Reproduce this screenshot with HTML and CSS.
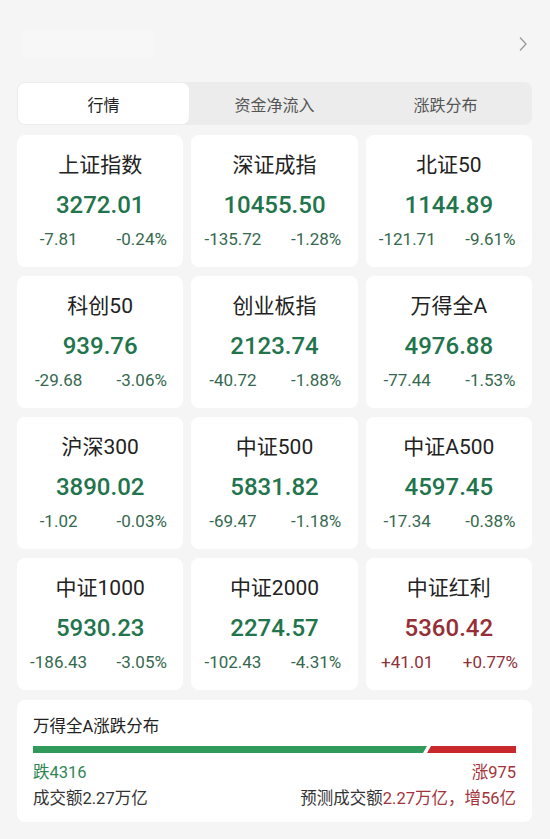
FILE: index.html
```html
<!DOCTYPE html>
<html lang="zh-CN">
<head>
<meta charset="utf-8">
<title>行情</title>
<link rel="stylesheet" href="styles.css">
</head>
<body>
<div class="page">
  <header class="header">
    <div class="header-title"></div>
    <svg class="chevron" width="10" height="16" viewBox="0 0 10 16"><path d="M2 1.5 L8 8 L2 14.5" fill="none" stroke="#9a9a9a" stroke-width="1.3"/></svg>
  </header>

  <nav class="tabs">
    <div class="tab active">行情</div>
    <div class="tab">资金净流入</div>
    <div class="tab">涨跌分布</div>
  </nav>

  <section class="grid">
    <div class="card down"><div class="name">上证指数</div><div class="value">3272.01</div><div class="chg"><span>-7.81</span><span>-0.24%</span></div></div>
    <div class="card down"><div class="name">深证成指</div><div class="value">10455.50</div><div class="chg"><span>-135.72</span><span>-1.28%</span></div></div>
    <div class="card down"><div class="name">北证50</div><div class="value">1144.89</div><div class="chg"><span>-121.71</span><span>-9.61%</span></div></div>

    <div class="card down"><div class="name">科创50</div><div class="value">939.76</div><div class="chg"><span>-29.68</span><span>-3.06%</span></div></div>
    <div class="card down"><div class="name">创业板指</div><div class="value">2123.74</div><div class="chg"><span>-40.72</span><span>-1.88%</span></div></div>
    <div class="card down"><div class="name">万得全A</div><div class="value">4976.88</div><div class="chg"><span>-77.44</span><span>-1.53%</span></div></div>

    <div class="card down"><div class="name">沪深300</div><div class="value">3890.02</div><div class="chg"><span>-1.02</span><span>-0.03%</span></div></div>
    <div class="card down"><div class="name">中证500</div><div class="value">5831.82</div><div class="chg"><span>-69.47</span><span>-1.18%</span></div></div>
    <div class="card down"><div class="name">中证A500</div><div class="value">4597.45</div><div class="chg"><span>-17.34</span><span>-0.38%</span></div></div>

    <div class="card down"><div class="name">中证1000</div><div class="value">5930.23</div><div class="chg"><span>-186.43</span><span>-3.05%</span></div></div>
    <div class="card down"><div class="name">中证2000</div><div class="value">2274.57</div><div class="chg"><span>-102.43</span><span>-4.31%</span></div></div>
    <div class="card up"><div class="name">中证红利</div><div class="value">5360.42</div><div class="chg"><span>+41.01</span><span>+0.77%</span></div></div>
  </section>

  <section class="dist">
    <div class="dist-title">万得全A涨跌分布</div>
    <div class="bar">
      <div class="bar-down" style="flex: 4316"></div>
      <div class="bar-up" style="flex: 975"></div>
    </div>
    <div class="dist-row counts">
      <span class="g">跌4316</span>
      <span class="r">涨975</span>
    </div>
    <div class="dist-row">
      <span>成交额2.27万亿</span>
      <span>预测成交额<em class="r">2.27万亿，增56亿</em></span>
    </div>
  </section>
</div>
</body>
</html>
```

FILE: styles.css
```css
* { box-sizing: border-box; }
html, body { margin: 0; padding: 0; }
body {
  background: #f5f5f5;
  font-family: Roboto, "Noto Sans CJK SC", sans-serif;
  color: #222;
}
.page {
  width: 550px;
  padding: 0 18px 0 17px;
}
.header {
  height: 48px;
  margin-top: 20px;
  margin-bottom: 14px;
  display: flex;
  align-items: center;
  justify-content: space-between;
}
.header-title {
  width: 132px;
  height: 28px;
  margin-left: 5px;
  background: #f7f7f7;
  border-radius: 2px;
}
.chevron { margin-right: 4px; }

.tabs {
  height: 43px;
  background: #ececec;
  border-radius: 8px;
  padding: 1px;
  display: grid;
  grid-template-columns: repeat(3, 1fr);
}
.tab {
  display: flex;
  align-items: center;
  justify-content: center;
  font-size: 16px;
  color: #555;
  border-radius: 7px;
}
.tab.active {
  background: #fff;
  color: #222;
}

.grid {
  margin-top: 10px;
  display: grid;
  grid-template-columns: repeat(3, 1fr);
  grid-auto-rows: 132px;
  gap: 9px 8px;
}
.card {
  background: #fff;
  border-radius: 8px;
  padding-top: 18px;
  text-align: center;
}
.name {
  font-size: 21px;
  line-height: 24px;
  color: #222;
}
.value {
  margin-top: 12px;
  font-size: 24px;
  line-height: 32px;
  font-weight: 500;
}
.chg {
  margin-top: 8px;
  display: flex;
  font-size: 17px;
  line-height: 20px;
}
.chg span { flex: 1; text-align: center; }
.down .value { color: #22744c; }
.down .chg { color: #35684e; }
.up .value { color: #962e38; }
.up .chg { color: #8e3039; }

.dist {
  margin-top: 10px;
  height: 122px;
  background: #fff;
  border-radius: 8px;
  padding: 17px 16px 0;
}
.dist-title {
  font-size: 16.5px;
  line-height: 20px;
  color: #222;
}
.bar {
  margin-top: 9px;
  height: 7px;
  display: flex;
  gap: 1px;
}
.bar-down {
  background: #2f9a5a;
  clip-path: polygon(0 0, 100% 0, calc(100% - 4px) 100%, 0 100%);
}
.bar-up {
  background: #c9292d;
  clip-path: polygon(4px 0, 100% 0, 100% 100%, 0 100%);
  margin-left: -1px;
}
.dist-row {
  margin-top: 6px;
  display: flex;
  justify-content: space-between;
  font-size: 16.5px;
  line-height: 20px;
  color: #333;
}
.dist-row.counts { margin-top: 10px; }
.dist-row em { font-style: normal; }
.g { color: #2e8656; }
.r { color: #a3333b; }
```
